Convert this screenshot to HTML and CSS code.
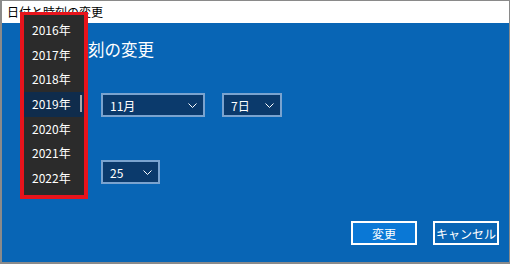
FILE: index.html
```html
<!DOCTYPE html>
<html lang="ja">
<head>
    <meta charset="UTF-8">
    <title>日付と時刻の変更</title>
    <link rel="stylesheet" href="styles.css">
</head>
<body>
    <div class="window">
        <div class="title-bar">日付と時刻の変更</div>
        <div class="content">
            <h1>日付と時刻の変更</h1>
            <div class="combo-row date-row">
                <!-- year combo sits under the open list, so no label -->
                <div class="combo year-combo"><span></span></div>
                <div class="combo month-combo"><span>11月</span><svg class="chevron" width="9" height="5" viewBox="0 0 9 5"><path d="M0.5 0.5 L4.5 4.5 L8.5 0.5" fill="none" stroke="#fff" stroke-width="1"/></svg></div>
                <div class="combo day-combo"><span>7日</span><svg class="chevron" width="9" height="5" viewBox="0 0 9 5"><path d="M0.5 0.5 L4.5 4.5 L8.5 0.5" fill="none" stroke="#fff" stroke-width="1"/></svg></div>
            </div>
            <div class="combo-row time-row">
                <div class="combo hour-combo"><span></span></div>
                <div class="combo minute-combo"><span>25</span><svg class="chevron" width="9" height="5" viewBox="0 0 9 5"><path d="M0.5 0.5 L4.5 4.5 L8.5 0.5" fill="none" stroke="#fff" stroke-width="1"/></svg></div>
            </div>
            <div class="button-row">
                <button class="btn btn-primary">変更</button>
                <button class="btn">キャンセル</button>
            </div>
        </div>

        <!-- year picker opened over the form, with the red highlight -->
        <div class="highlight">
            <div class="year-list">
                <div class="year-item">2016年</div>
                <div class="year-item">2017年</div>
                <div class="year-item">2018年</div>
                <div class="year-item selected">2019年<span class="scroll-thumb"></span></div>
                <div class="year-item">2020年</div>
                <div class="year-item">2021年</div>
                <div class="year-item">2022年</div>
            </div>
        </div>
    </div>
</body>
</html>
```

FILE: styles.css
```css
body {
    margin: 0;
    padding: 0;
    font-family: "Noto Sans CJK JP", sans-serif;
}
.window {
    position: relative;
    width: 510px;
    height: 264px;
    box-sizing: border-box;
    border: 1px solid #8a8a8a;
    border-left-width: 2px;
    border-bottom-width: 2px;
    display: flex;
    flex-direction: column;
    overflow: hidden;
}
.title-bar {
    height: 22px;
    line-height: 21px;
    padding-left: 5px;
    font-size: 12px;
    color: #000;
    background-color: #fff;
}
.content {
    flex: 1;
    background-color: #0865b5;
    padding: 14px 10px 0 20px;
}
.content h1 {
    margin: 0;
    font-size: 16.5px;
    font-weight: normal;
    line-height: 24px;
    color: #fff;
}
.combo-row {
    display: flex;
    gap: 17px;
}
.date-row {
    margin-top: 32px;
}
.time-row {
    margin-top: 43px;
}
.combo {
    height: 24px;
    box-sizing: border-box;
    border: 2px solid #7aa3cf;
    background-color: #0b3a6c;
    color: #fff;
    font-size: 12px;
    display: flex;
    align-items: center;
    justify-content: space-between;
    padding: 0 6px 0 7px;
}
.year-combo, .hour-combo {
    width: 62px;
}
.month-combo {
    width: 104px;
}
.day-combo {
    width: 60px;
}
.minute-combo {
    width: 59px;
}
.chevron {
    display: block;
}
.button-row {
    display: flex;
    justify-content: flex-end;
    gap: 16px;
    margin-top: 37px;
}
.btn {
    height: 24px;
    width: 66px;
    box-sizing: border-box;
    border: 2px solid #fff;
    background-color: #0865b5;
    color: #fff;
    font-family: "Noto Sans CJK JP", sans-serif;
    font-size: 12px;
    padding: 0;
}
.btn-primary {
    background-color: #0a78d6;
}
.highlight {
    position: absolute;
    left: 18px;
    top: 11px;
    width: 60px;
    height: 180px;
    border: 4px solid #e8141c;
    border-top-width: 3px;
}
.year-list {
    height: 100%;
    background-color: #2b2b2b;
    padding-top: 3px;
    box-sizing: border-box;
}
.year-item {
    position: relative;
    height: 24.7px;
    line-height: 24.7px;
    padding-left: 8px;
    font-size: 12px;
    color: #fff;
}
.year-item.selected {
    background-color: #0f2c4c;
}
.scroll-thumb {
    position: absolute;
    right: 2px;
    top: 3px;
    width: 2px;
    height: 17px;
    background-color: #a8a8a8;
}
```
